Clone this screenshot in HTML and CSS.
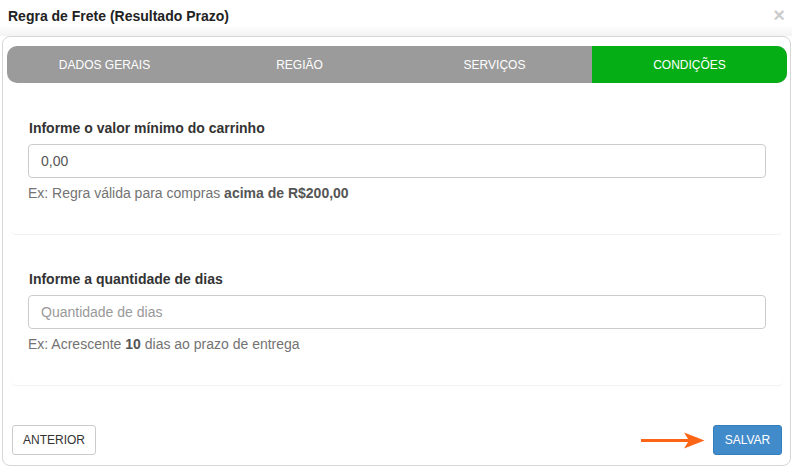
FILE: index.html
```html
<!DOCTYPE html>
<html lang="pt-BR">
<head>
<meta charset="utf-8">
<title>Regra de Frete (Resultado Prazo)</title>
<link rel="stylesheet" href="styles.css">
</head>
<body>
<div class="modal">
  <div class="modal-header">
    <h4 class="modal-title">Regra de Frete (Resultado Prazo)</h4>
    <span class="close">×</span>
  </div>
  <div class="panel">
    <div class="tabs">
      <div class="tab">DADOS GERAIS</div>
      <div class="tab">REGIÃO</div>
      <div class="tab">SERVIÇOS</div>
      <div class="tab active">CONDIÇÕES</div>
    </div>
    <div class="section">
      <label class="label">Informe o valor mínimo do carrinho</label>
      <input class="input" type="text" value="0,00">
      <p class="help">Ex: Regra válida para compras <b>acima de R$200,00</b></p>
    </div>
    <div class="section">
      <label class="label">Informe a quantidade de dias</label>
      <input class="input" type="text" placeholder="Quantidade de dias">
      <p class="help">Ex: Acrescente <b>10</b> dias ao prazo de entrega</p>
    </div>
    <div class="footer">
      <button class="btn btn-default">ANTERIOR</button>
      <div class="right">
        <svg class="arrow" width="64" height="17" viewBox="0 0 64 17">
          <rect x="0" y="7" width="50" height="3" fill="#fd6516"/>
          <polygon points="43,0.5 63.5,8.5 43,16.5 48,8.5" fill="#fd6516"/>
        </svg>
        <button class="btn btn-primary">SALVAR</button>
      </div>
    </div>
  </div>
</div>
</body>
</html>
```
FILE: styles.css
```css
* { box-sizing: border-box; }
html, body { margin: 0; padding: 0; background: #fff; }
body {
  font-family: "Liberation Sans", Arial, sans-serif;
  font-size: 14px;
  color: #333;
  width: 792px;
  height: 467px;
  overflow: hidden;
}
.modal { display: flex; flex-direction: column; height: 467px; }
.modal-header {
  height: 36px;
  display: flex;
  align-items: flex-start;
  justify-content: space-between;
  padding: 7px 7px 0 8px;
  background: linear-gradient(to bottom, #fff 70%, #f3f3f3 100%);
}
.modal-title {
  margin: 0;
  font-size: 14px;
  font-weight: bold;
  line-height: 18px;
  color: #222;
}
.close {
  font-size: 20px;
  font-weight: bold;
  line-height: 16px;
  color: #000;
  opacity: 0.2;
}
.panel {
  margin: 0 1px 1px 2px;
  flex: 1;
  border: 1px solid #d6d6d6;
  border-radius: 8px;
  padding: 9px 8px 10px 9px;
  display: flex;
  flex-direction: column;
  background: #fff;
}
.tabs {
  display: flex;
  margin: 0 -5px;
  height: 37px;
  border-radius: 10px;
  overflow: hidden;
  background: #9b9b9b;
}
.tab {
  flex: 1;
  display: flex;
  align-items: center;
  justify-content: center;
  color: #fff;
  font-size: 12px;
}
.tab.active { background: #05ae14; }
.section {
  padding: 36px 16px 32px 16px;
  border-radius: 0 0 4px 4px;
  box-shadow: 0 1px 1px rgba(0, 0, 0, 0.06);
  display: flex;
  flex-direction: column;
}
.label {
  font-weight: bold;
  line-height: 19px;
  color: #333;
  margin-bottom: 6px;
  padding-left: 1px;
}
.input {
  height: 34px;
  border: 1px solid #ccc;
  border-radius: 4px;
  padding: 0 12px;
  font-family: inherit;
  font-size: 14px;
  color: #555;
  outline: none;
  width: 100%;
}
.input::placeholder { color: #999; }
.help {
  margin: 6px 0 0 0;
  line-height: 18px;
  color: #737373;
}
.help b { color: #555; }
.footer {
  margin-top: auto;
  display: flex;
  justify-content: space-between;
  align-items: center;
}
.right { display: flex; align-items: center; gap: 8px; }
.arrow { display: block; }
.btn {
  font-family: inherit;
  font-size: 12px;
  height: 30px;
  border-radius: 3px;
  padding: 0 6px;
  cursor: pointer;
}
.btn-default {
  background: #fff;
  border: 1px solid #ccc;
  color: #333;
  width: 84px;
}
.btn-primary {
  background: #428bca;
  border: 1px solid #357ebd;
  color: #fff;
  width: 69px;
}
```
